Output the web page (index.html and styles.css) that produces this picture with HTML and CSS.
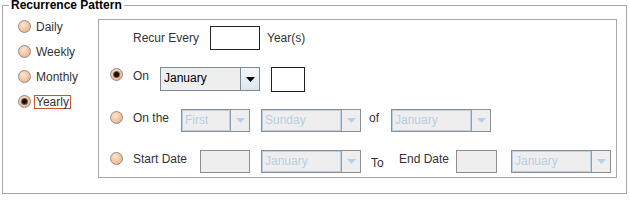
FILE: index.html
```html
<!DOCTYPE html>
<html lang="en">
<head>
    <meta charset="UTF-8">
    <title>Recurrence Pattern</title>
    <link rel="stylesheet" href="styles.css">
</head>
<body>

    <fieldset class="pattern">
        <legend class="pattern__title">Recurrence Pattern</legend>

        <div class="pattern__body">

            <div class="pattern__types">
                <div class="type__row"><span class="radio"></span><span class="type__label">Daily</span></div>
                <div class="type__row"><span class="radio"></span><span class="type__label">Weekly</span></div>
                <div class="type__row"><span class="radio"></span><span class="type__label">Monthly</span></div>
                <div class="type__row"><span class="radio radio--on"></span><span class="type__label type__label--focus">Yearly</span></div>
            </div>

            <div class="pattern__panel">

                <div class="panel__row">
                    <span class="radio radio--none"></span>
                    <span class="label label--flat label--every">Recur Every</span>
                    <span class="field field--every"></span>
                    <span class="label label--flat label--years">Year(s)</span>
                </div>

                <div class="panel__row">
                    <span class="radio radio--on radio--high"></span>
                    <span class="label label--on label--high">On</span>
                    <div class="combo">
                        <span class="combo__text">January</span>
                        <span class="combo__btn"><svg width="9" height="5" viewBox="0 0 9 5"><path d="M0 0h9L4.5 5z" fill="#000"/></svg></span>
                    </div>
                    <span class="field field--day"></span>
                </div>

                <div class="panel__row">
                    <span class="radio"></span>
                    <span class="label label--onthe">On the</span>
                    <div class="combo combo--off combo--small">
                        <span class="combo__text">First</span>
                        <span class="combo__btn"><svg width="9" height="5" viewBox="0 0 9 5"><path d="M0 0h9L4.5 5z" fill="#b8cfe5"/></svg></span>
                    </div>
                    <div class="combo combo--off combo--gap">
                        <span class="combo__text">Sunday</span>
                        <span class="combo__btn"><svg width="9" height="5" viewBox="0 0 9 5"><path d="M0 0h9L4.5 5z" fill="#b8cfe5"/></svg></span>
                    </div>
                    <span class="label label--of">of</span>
                    <div class="combo combo--off">
                        <span class="combo__text">January</span>
                        <span class="combo__btn"><svg width="9" height="5" viewBox="0 0 9 5"><path d="M0 0h9L4.5 5z" fill="#b8cfe5"/></svg></span>
                    </div>
                </div>

                <div class="panel__row">
                    <span class="radio"></span>
                    <span class="label label--start">Start Date</span>
                    <span class="field field--off field--start"></span>
                    <div class="combo combo--off combo--gap">
                        <span class="combo__text">January</span>
                        <span class="combo__btn"><svg width="9" height="5" viewBox="0 0 9 5"><path d="M0 0h9L4.5 5z" fill="#b8cfe5"/></svg></span>
                    </div>
                    <span class="label label--to">To</span>
                    <span class="label label--end">End Date</span>
                    <span class="field field--off field--end"></span>
                    <div class="combo combo--off combo--last">
                        <span class="combo__text">January</span>
                        <span class="combo__btn"><svg width="9" height="5" viewBox="0 0 9 5"><path d="M0 0h9L4.5 5z" fill="#b8cfe5"/></svg></span>
                    </div>
                </div>

            </div>
        </div>
    </fieldset>

</body>
</html>
```

FILE: styles.css
```css
body {
    margin: 0;
    background-color: #ffffff;
    font-family: "Liberation Sans", Arial, sans-serif;
    font-size: 12px;
    color: #333333;
}

.pattern {
    box-sizing: border-box;
    width: 625px;
    height: 194px;
    margin: 0 0 0 2px;
    padding: 8px 9px 15px 0;
    border: 1px solid #a8a8a8;
}

.pattern__title {
    padding: 0 2px;
    margin-left: 6px;
    font-weight: bold;
    color: #000000;
    line-height: 11px;
}

.pattern__body {
    display: flex;
}

/* left column : type of recurrence */
.pattern__types {
    width: 95px;
    display: flex;
    flex-direction: column;
    gap: 10px;
    padding-left: 15px;
    box-sizing: border-box;
}

.type__row {
    height: 15px;
    display: flex;
    align-items: center;
}

.type__label {
    margin-left: 3px;
    padding: 0 1px;
    border: 1px solid transparent;
    line-height: 12px;
}

.type__label--focus {
    border-color: #c4553c;
}

.radio {
    box-sizing: border-box;
    width: 13px;
    height: 13px;
    flex: none;
    border-radius: 50%;
    border: 1px solid #8d8d8d;
    background: radial-gradient(circle at 40% 35%, #fde6d4 0%, #f4c39d 55%, #e9a77a 100%);
    display: flex;
    align-items: center;
    justify-content: center;
}

.radio--on::after {
    content: "";
    width: 5px;
    height: 5px;
    border-radius: 50%;
    background-color: #111111;
    box-shadow: 0 0 0 1px #7a5a48;
}

.radio--none {
    visibility: hidden;
}

/* right panel */
.pattern__panel {
    box-sizing: border-box;
    width: 519px;
    height: 159px;
    border: 1px solid #a8a8a8;
    padding: 6px 0 0 11px;
    display: flex;
    flex-direction: column;
    gap: 17px;
}

.panel__row {
    height: 24px;
    display: flex;
    align-items: center;
}

.panel__row .radio {
    margin-bottom: 5px;
}

.panel__row .radio--high {
    margin-bottom: 9px;
}

.label {
    flex: none;
    white-space: nowrap;
    padding-bottom: 5px;
}

.panel__row > .radio + .label {
    margin-left: 10px;
}

.label--flat {
    padding-bottom: 0;
}

.label--high {
    padding-bottom: 7px;
}

.label--every { width: 77px; }
.label--years { margin-left: 7px; }
.label--on { width: 27px; }
.label--onthe { width: 48px; }
.label--of { width: 22px; margin-left: 8px; }
.label--start { width: 67px; }
.label--to { width: 28px; margin-left: 10px; padding-bottom: 0; padding-top: 3px; }
.label--end { width: 57px; }

/* text fields */
.field {
    box-sizing: border-box;
    flex: none;
    height: 24px;
    border: 1px solid #222222;
    background-color: #ffffff;
}

.field--every { width: 50px; }
.field--day { width: 34px; height: 25px; margin-left: 11px; }

.field--off {
    background-color: #eeeeee;
    border-color: #8e8e8e;
    height: 23px;
}

.field--start { width: 50px; }
.field--end { width: 41px; }

/* combo boxes */
.combo {
    box-sizing: border-box;
    flex: none;
    width: 100px;
    height: 24px;
    display: flex;
    border: 1px solid #7a8a99;
    background-color: #eeeeee;
}

.combo__text {
    flex: 1;
    padding-left: 3px;
    line-height: 21px;
    color: #000000;
}

.combo__btn {
    width: 18px;
    border-left: 1px solid #7a8a99;
    background: linear-gradient(#f4f7fa, #dde5ec);
    display: flex;
    align-items: center;
    justify-content: center;
}

.combo--off {
    height: 23px;
    border-color: #8e8e8e;
}

.combo--off .combo__text {
    color: #b8cfe5;
    box-shadow: inset 0 0 0 1px #b8cfe5;
    border-right: 1px solid #8da0b3;
}

.combo--off .combo__btn {
    background: #eeeeee;
    border-left: none;
}

.combo--small { width: 69px; }
.combo--gap { margin-left: 11px; }
.combo--last { margin-left: 14px; }
```
